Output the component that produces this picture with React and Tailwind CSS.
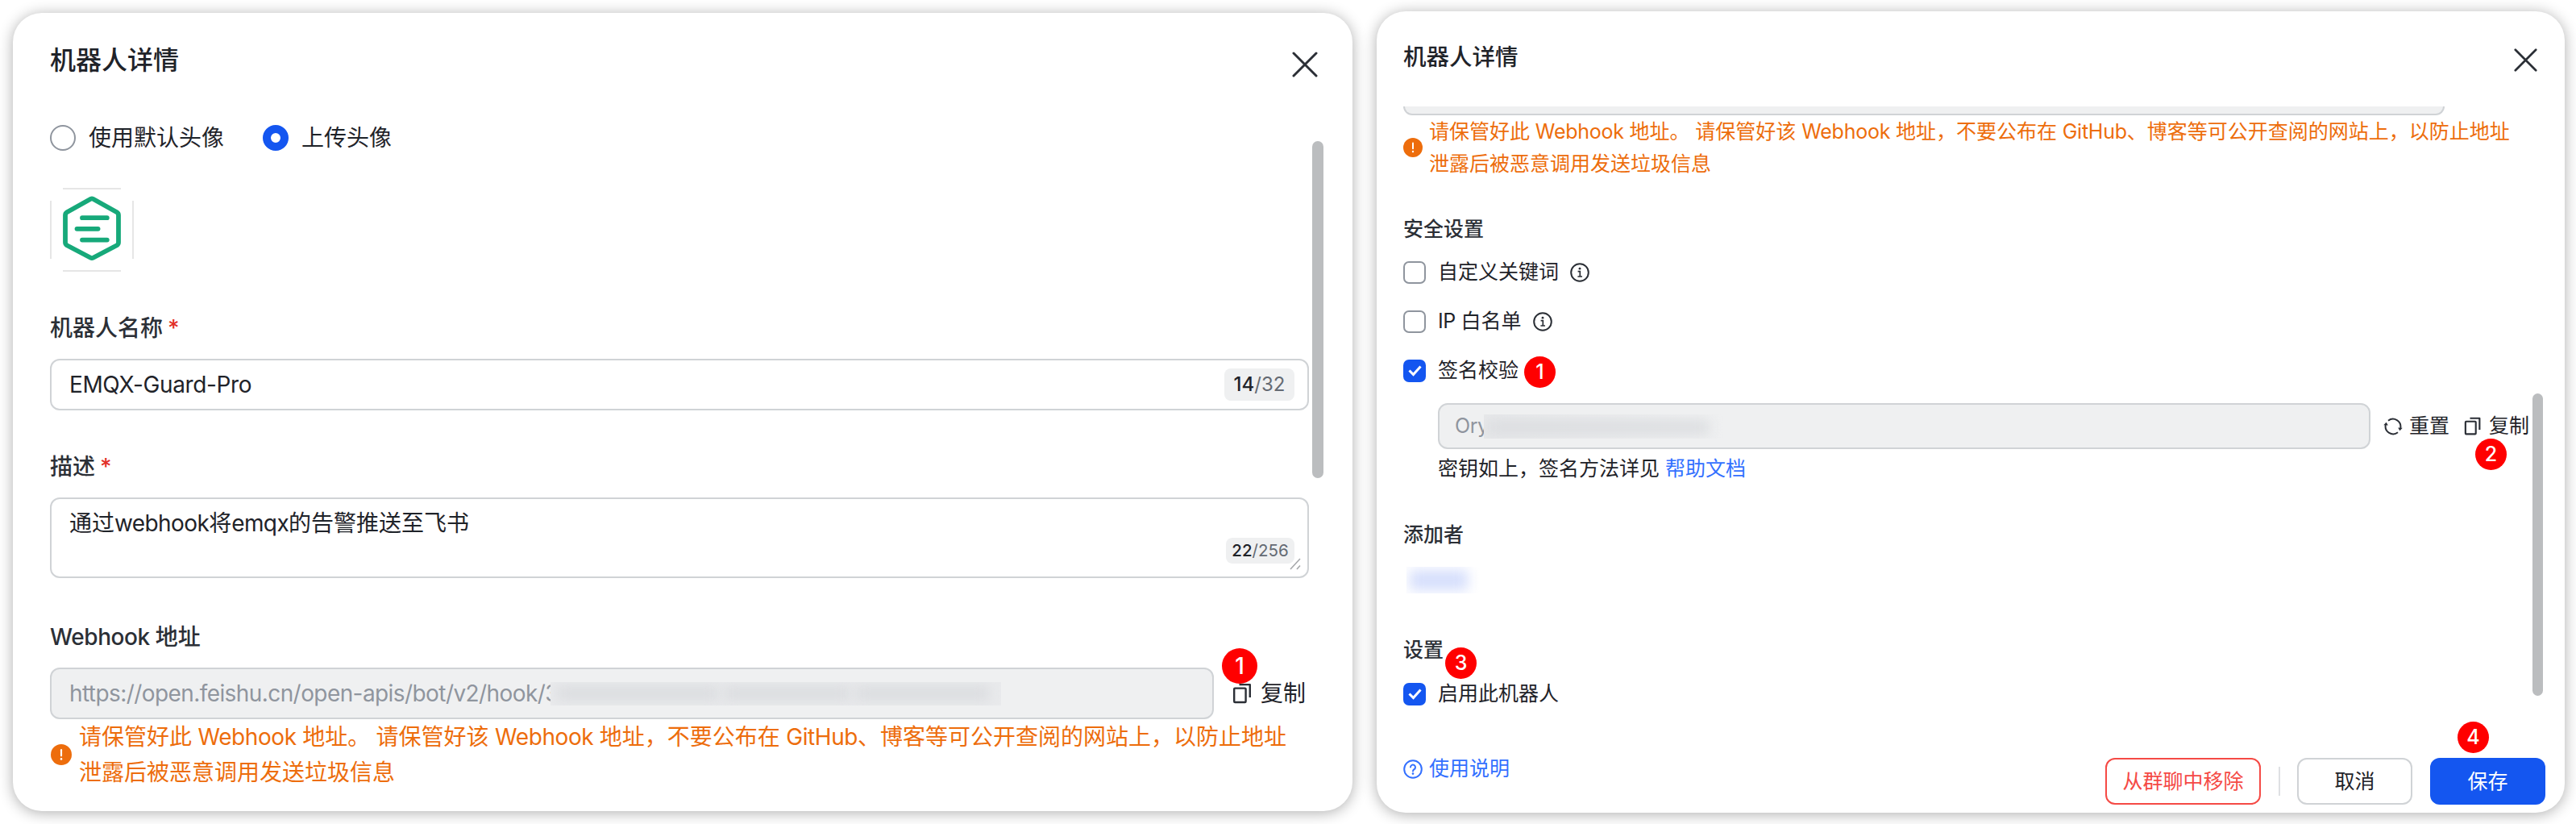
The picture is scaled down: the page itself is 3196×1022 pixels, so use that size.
import React from "react";

const CloseIcon = ({ size }) => (
  <svg width={size} height={size} viewBox="0 0 32 32" fill="none" stroke="#2b2f36" strokeWidth="3" strokeLinecap="round">
    <path d="M2 2L30 30M30 2L2 30" />
  </svg>
);

const CopyIcon = ({ size }) => (
  <svg width={size} height={size} viewBox="0 0 28 28" fill="none" stroke="#2b2f36" strokeWidth="2.4" strokeLinejoin="round">
    <rect x="3.2" y="7.600" width="14.400" height="17.400" rx="1" />
    <path d="M9.500 3.100H22.800V19" />
  </svg>
);

const ResetIcon = () => (
  <svg width="24" height="24" viewBox="0 0 24 24" fill="none" stroke="#2b2f36" strokeWidth="2">
    <path d="M6 4.700A9.500 9.500 0 0 1 21.200 14" />
    <path d="M18 19.300A9.500 9.500 0 0 1 2.800 10" />
    <path d="M0.300 10.200L5.900 10.600L3.500 6.800Z" fill="#2b2f36" stroke="none" />
    <path d="M23.700 13.800L18.100 13.400L20.500 17.200Z" fill="#2b2f36" stroke="none" />
  </svg>
);

const WarnIcon = ({ size }) => (
  <svg width={size} height={size} viewBox="0 0 24 24" className="shrink-0">
    <circle cx="12" cy="12" r="12" fill="#ed6d0c" />
    <path d="M12 6.6V13.2" stroke="#fff" strokeWidth="2" strokeLinecap="round" />
    <circle cx="12" cy="17" r="1.2" fill="#fff" />
  </svg>
);

const InfoIcon = () => (
  <svg width="24" height="24" viewBox="0 0 24 24" fill="none" stroke="#2b2f36" strokeWidth="2">
    <circle cx="12" cy="12" r="10.8" />
    <circle cx="12" cy="7.2" r="1.4" fill="#2b2f36" stroke="none" />
    <path d="M9.600 10.600H12.300V17M9.400 17H15" strokeWidth="1.700" />
  </svg>
);

const HelpIcon = () => (
  <svg width="24" height="24" viewBox="0 0 24 24" fill="none" stroke="#3370ff" strokeWidth="2">
    <circle cx="12" cy="12" r="10.8" />
    <path d="M9 9.600a3 3 0 1 1 4.600 2.500c-1 .7-1.600 1.100-1.600 2.400" strokeLinecap="round" />
    <circle cx="12" cy="17.600" r="1.3" fill="#3370ff" stroke="none" />
  </svg>
);

const Logo = () => (
  <svg width="104" height="104" viewBox="0 0 104 104" fill="none" stroke="#17a97a" strokeLinecap="round" strokeLinejoin="round" strokeWidth="5.800">
    <path d="M50.500 13.700Q52 12.900 53.500 13.700L83 30.300Q85 31.500 85 34V67.500Q85 70 83 71.200L53.500 86.700Q52 87.500 50.500 86.700L21 71.200Q19 70 19 67.500V34Q19 31.500 21 30.300Z" />
    <path d="M40 37.200H70.800M33.500 50.800H59.600M40 64.600H70.800" />
  </svg>
);

const Checkbox = ({ checked }) =>
  checked ? (
    <span className="flex h-7 w-7 items-center justify-center rounded-[7px] bg-[#1456f0]">
      <svg width="19" height="19" viewBox="0 0 19 19" fill="none" stroke="#fff" strokeWidth="3">
        <path d="M2.500 9.500L7.500 14.500L16.500 4.500" />
      </svg>
    </span>
  ) : (
    <span className="h-7 w-7 rounded-[7px] border-2 border-[#8f959e]" />
  );

const Step = ({ n, className }) => (
  <span className={"absolute z-10 flex items-center justify-center rounded-full bg-[#ff0000] font-medium text-white " + className}>{n}</span>
);

/* Latin run inside Chinese copy, set slightly tighter */
const En = ({ children }) => <span className="tracking-[-0.015em]">{children}</span>;
const EnSmall = ({ children }) => <span className="tracking-[-0.01em]">{children}</span>;

const Warning = ({ Latin }) => (
  <>
    <p className="whitespace-pre">请保管好此<Latin> Webhook </Latin>地址。<Latin> </Latin>请保管好该<Latin> Webhook </Latin>地址，不要公布在<Latin> GitHub</Latin>、博客等可公开查阅的网站上，以防止地址</p>
    <p>泄露后被恶意调用发送垃圾信息</p>
  </>
);

function ProfilePanel() {
  return (
    <section className="relative h-[990px] w-[1662px] rounded-[36px] bg-white pl-[46px] text-[28px] leading-[44px] shadow-[0_2px_18px_rgba(0,0,0,0.32)]">
      <header className="flex h-[133px] justify-between pr-[43px] pt-[37px]">
        <h1 className="text-[32px] font-medium leading-[44px]">机器人详情</h1>
        <span className="mt-[11px]"><CloseIcon size={32} /></span>
      </header>

      <div className="flex items-center">
        <span className="h-8 w-8 rounded-full border-2 border-[#8f959e]" />
        <span className="ml-4 w-[216px]">使用默认头像</span>
        <span className="h-8 w-8 rounded-full border-[10px] border-[#1456f0]" />
        <span className="ml-4">上传头像</span>
      </div>

      <div className="relative mt-10 h-[104px] w-[104px]">
        <Logo />
        <span className="absolute inset-x-4 top-0 h-0.5 bg-[#e6e6e6]" />
        <span className="absolute inset-x-4 bottom-0 h-0.5 bg-[#e6e6e6]" />
        <span className="absolute inset-y-4 left-0 w-0.5 bg-[#e6e6e6]" />
        <span className="absolute inset-y-4 right-0 w-0.5 bg-[#e6e6e6]" />
      </div>

      <label className="mt-[48px] block font-medium text-[#2b2f36]">机器人名称<span className="ml-[6px] text-[#e22e28]">*</span></label>
      <div className="mt-4 flex h-16 w-[1562px] items-center justify-between rounded-xl border-2 border-[#d0d3d6] pl-[22px] pr-4">
        <span className="tracking-[-0.4px]">EMQX-Guard-Pro</span>
        <span className="flex h-10 w-[87px] items-center justify-center rounded-lg bg-[#eff0f1] text-[24px] text-[#646a73]"><span className="font-medium text-[#1f2329]">14</span>/32</span>
      </div>

      <label className="mt-[48px] block font-medium text-[#2b2f36]">描述<span className="ml-[6px] text-[#e22e28]">*</span></label>
      <div className="relative mt-4 flex h-[100px] w-[1562px] items-start justify-between rounded-xl border-2 border-[#d0d3d6] pl-[22px] pr-4 pt-2">
        <span>通过<span className="tracking-[-0.6px]">webhook</span>将<span className="tracking-[-0.6px]">emqx</span>的告警推送至飞书</span>
        <span className="mt-10 flex h-8 w-[85px] items-center justify-center rounded-lg bg-[#eff0f1] text-[20.500px] text-[#646a73]"><span className="font-medium text-[#1f2329]">22</span>/256</span>
        <svg className="absolute bottom-2 right-2" width="14" height="16" viewBox="0 0 14 16" stroke="#a6a8ab" strokeWidth="1.600">
          <path d="M1 15L13 2M9 15L13 10.500" />
        </svg>
      </div>

      <label className="mt-[51px] block font-medium text-[#2b2f36]"><En>Webhook </En>地址</label>
      <div className="relative mt-4 flex items-center">
        <div className="flex h-16 w-[1444px] items-center rounded-xl border-2 border-[#d0d3d6] bg-[#eff0f1] pl-[22px] text-[#8f959e]">
          <span className="w-[597px] whitespace-nowrap tracking-[-0.58px]">https://open.feishu.cn/open-apis/bot/v2/hook/3</span>
          <span className="relative flex h-[29px] w-[559px] items-center gap-2 overflow-hidden bg-[#e9eaec] px-2">
            <span className="h-4 w-[200px] bg-[#d9dbde] blur-[8px]" />
            <span className="h-4 w-[155px] bg-[#d9dbde] blur-[8px]" />
            <span className="h-4 w-[165px] bg-[#d9dbde] blur-[8px]" />
          </span>
        </div>
        <span className="ml-[22px]"><CopyIcon size={28} /></span>
        <span className="ml-2">复制</span>
        <Step n="1" className="left-[1454px] -top-6 h-11 w-11 text-[28px]" />
      </div>
      <div className="flex items-center gap-[9px] pl-px text-[#ed6d0c]">
        <WarnIcon size={26} />
        <div><Warning Latin={En} /></div>
      </div>

      <span className="absolute right-[36px] top-[159px] h-[418px] w-[14px] rounded-full bg-[#bbbdbf]" />
    </section>
  );
}

function SecurityPanel() {
  return (
    <section className="relative h-[994px] w-[1474px] rounded-[36px] bg-white pl-[33px] text-[25px] leading-[39px] shadow-[0_2px_18px_rgba(0,0,0,0.32)]">
      <header className="flex h-[118px] justify-between pr-[34px] pt-[37px]">
        <h1 className="text-[28.500px] font-medium leading-[40px]">机器人详情</h1>
        <span className="mt-[9px]"><CloseIcon size={29} /></span>
      </header>

      <div className="h-[11px] w-[1292px] rounded-b-xl border-2 border-t-0 border-[#d0d3d6] bg-[#eff0f1]" />
      <div className="flex items-center gap-2 leading-10 text-[#ed6d0c]">
        <WarnIcon size={24} />
        <div><Warning Latin={EnSmall} /></div>
      </div>

      <h2 className="mt-[42px] font-medium text-[#2b2f36]">安全设置</h2>
      <div className="mt-[14px] flex items-center gap-[15px]">
        <Checkbox /><span className="-mr-[1px]">自定义关键词</span><InfoIcon />
      </div>
      <div className="mt-[22px] flex items-center gap-[15px]">
        <Checkbox /><span className="-mr-[1px]"><En>IP </En>白名单</span><InfoIcon />
      </div>
      <div className="relative mt-[22px] flex items-center gap-[15px]">
        <Checkbox checked /><span>签名校验</span>
        <Step n="1" className="left-[150px] top-[2px] h-[39px] w-[39px] text-[25px]" />
      </div>

      <div className="relative mt-[21px] flex items-center pl-[43px]">
        <div className="flex h-[57px] w-[1157px] items-center rounded-xl border-2 border-[#d0d3d6] bg-[#eff0f1] pl-[19px] text-[#8f959e]">
          <span className="w-[36px] tracking-[-0.4px]">Ory</span>
          <span className="relative h-[30px] w-[299px] overflow-hidden bg-linear-to-r from-[#e7e8ea] to-[#eff0f1]">
            <span className="mx-1 mt-2 block h-4 w-[275px] bg-[#dadcdf] blur-[8px]" />
          </span>
        </div>
        <span className="ml-[16px]"><ResetIcon /></span>
        <span className="ml-2">重置</span>
        <span className="ml-[17px]"><CopyIcon size={25} /></span>
        <span className="ml-[7px]">复制</span>
        <Step n="2" className="left-[1330px] top-[44px] h-[39px] w-[39px] text-[25px]" />
      </div>
      <p className="mt-[5px] pl-[43px]">密钥如上，签名方法详见 <span className="text-[#3370ff]">帮助文档</span></p>

      <h2 className="mt-[43px] font-medium text-[#2b2f36]">添加者</h2>
      <div className="mt-5 ml-1 h-[33px] w-[93px] overflow-hidden">
        <div className="mt-1 ml-1 h-[25px] w-[72px] bg-[#d5defc] blur-[8px]" />
      </div>

      <div className="relative mt-[51px]">
        <h2 className="font-medium text-[#2b2f36]">设置</h2>
        <Step n="3" className="left-[52px] top-[16px] h-[39px] w-[39px] text-[25px]" />
      </div>
      <div className="mt-[15px] flex items-center gap-[15px]">
        <Checkbox checked /><span>启用此机器人</span>
      </div>

      <footer className="relative mt-[54px] flex items-start justify-between pr-[24px]">
        <div className="flex items-center gap-2 text-[#3370ff]"><HelpIcon />使用说明</div>
        <div className="mt-[6px] flex items-center">
          <button className="h-[58px] w-[193px] rounded-xl border-2 border-[#f54a45] text-[#f54a45]">从群聊中移除</button>
          <span className="ml-[22px] h-9 w-0.5 bg-[#dee0e3]" />
          <button className="ml-[21px] h-[58px] w-[143px] rounded-xl border-2 border-[#d0d3d6]">取消</button>
          <button className="ml-[22px] h-[58px] w-[143px] rounded-xl bg-[#1456f0] text-white">保存</button>
        </div>
        <Step n="4" className="left-[1308px] -top-[39px] h-[39px] w-[39px] text-[25px]" />
      </footer>

      <span className="absolute right-[27px] top-[474px] h-[375px] w-[13px] rounded-full bg-[#bbbdbf]" />
    </section>
  );
}

export default function App() {
  return (
    <main className="flex h-[1022px] w-[3196px] items-start gap-[30px] overflow-hidden bg-white pl-4 pt-[14px] font-['Inter','Noto_Sans_CJK_SC',sans-serif] text-[#1f2329]">
      <div className="pt-[2px]"><ProfilePanel /></div>
      <SecurityPanel />
    </main>
  );
}
